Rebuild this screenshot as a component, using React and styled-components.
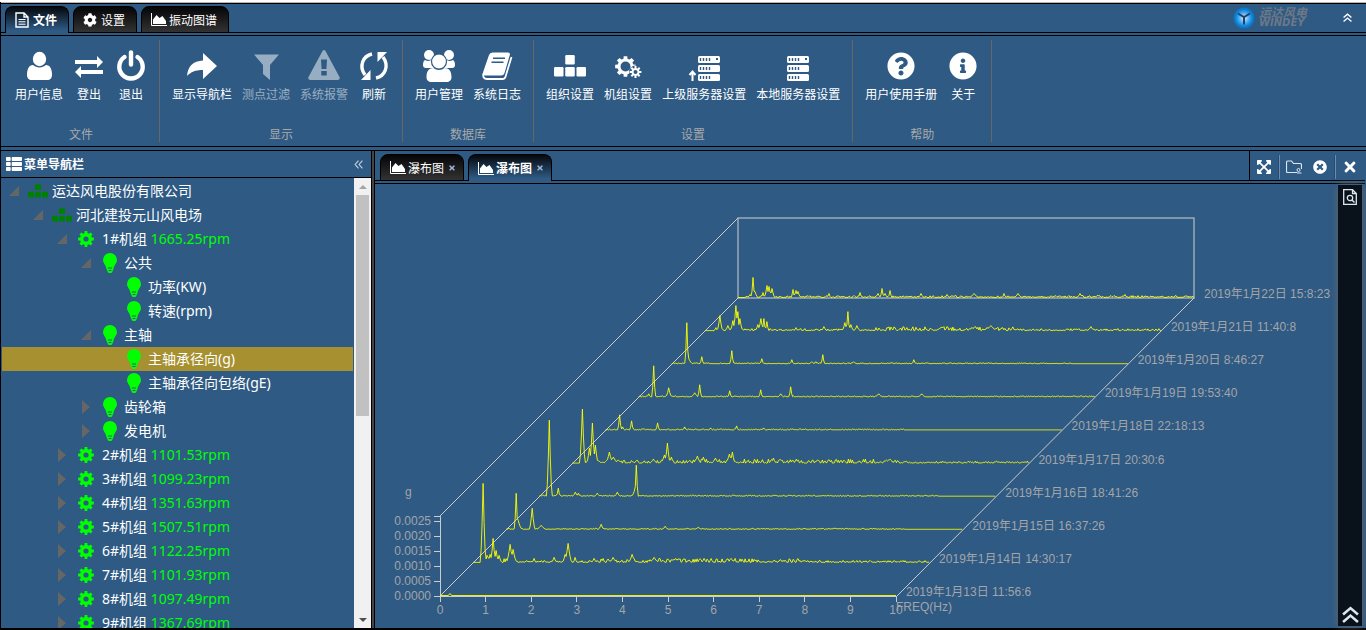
import React from "react";
import styled, { createGlobalStyle, css } from "styled-components";
import {
  FaCog,
  FaExpandArrowsAlt,
  FaInfoCircle,
  FaQuestionCircle,
  FaThList,
  FaTimes,
  FaTimesCircle,
} from "react-icons/fa";

const COLORS = {
  blue: "#2e5a84",
  black: "#000",
  strip: "#09111a",
  divider: "#666",
  muted: "#a9a9a9",
  selected: "#a69030",
  lime: "#0f0",
  green: "#008000",
  trace: "#ff0",
  axis: "#ccc",
};

const FONTS = {
  ui: '"Noto Sans", "Noto Sans CJK SC", sans-serif',
  chart: '"Liberation Sans", "Noto Sans CJK SC", sans-serif',
};

/* ---------- data ---------- */

const RIBBON_TABS = [
  { label: "文件", icon: "file", active: true },
  { label: "设置", icon: "cog" },
  { label: "振动图谱", icon: "area" },
];

const RIBBON_GROUPS = [
  {
    label: "文件",
    items: [
      { label: "用户信息", icon: "user" },
      { label: "登出", icon: "exchange" },
      { label: "退出", icon: "power" },
    ],
  },
  {
    label: "显示",
    items: [
      { label: "显示导航栏", icon: "share" },
      { label: "测点过滤", icon: "filter", disabled: true },
      { label: "系统报警", icon: "warning", disabled: true },
      { label: "刷新", icon: "refresh" },
    ],
  },
  {
    label: "数据库",
    items: [
      { label: "用户管理", icon: "users" },
      { label: "系统日志", icon: "book" },
    ],
  },
  {
    label: "设置",
    items: [
      { label: "组织设置", icon: "org" },
      { label: "机组设置", icon: "gears" },
      { label: "上级服务器设置", icon: "serverUp" },
      { label: "本地服务器设置", icon: "server" },
    ],
  },
  {
    label: "帮助",
    items: [
      { label: "用户使用手册", icon: "help" },
      { label: "关于", icon: "info" },
    ],
  },
];

const TREE = [
  { level: 0, icon: "org", label: "运达风电股份有限公司", open: true },
  { level: 1, icon: "org", label: "河北建投元山风电场", open: true },
  { level: 2, icon: "gear", label: "1#机组", speed: "1665.25rpm", open: true },
  { level: 3, icon: "bulb", label: "公共", open: true },
  { level: 4, icon: "bulb", label: "功率(KW)" },
  { level: 4, icon: "bulb", label: "转速(rpm)" },
  { level: 3, icon: "bulb", label: "主轴", open: true },
  { level: 4, icon: "bulb", label: "主轴承径向(g)", selected: true },
  { level: 4, icon: "bulb", label: "主轴承径向包络(gE)" },
  { level: 3, icon: "bulb", label: "齿轮箱", open: false },
  { level: 3, icon: "bulb", label: "发电机", open: false },
  { level: 2, icon: "gear", label: "2#机组", speed: "1101.53rpm", open: false },
  { level: 2, icon: "gear", label: "3#机组", speed: "1099.23rpm", open: false },
  { level: 2, icon: "gear", label: "4#机组", speed: "1351.63rpm", open: false },
  { level: 2, icon: "gear", label: "5#机组", speed: "1507.51rpm", open: false },
  { level: 2, icon: "gear", label: "6#机组", speed: "1122.25rpm", open: false },
  { level: 2, icon: "gear", label: "7#机组", speed: "1101.93rpm", open: false },
  { level: 2, icon: "gear", label: "8#机组", speed: "1097.49rpm", open: false },
  { level: 2, icon: "gear", label: "9#机组", speed: "1367.69rpm", open: false },
];

// peaks: [x, height, half width]; noise: [from, to, amplitude], all in chart units
const SERIES = [
  { label: "2019年1月13日 11:56:6", peaks: [[10, 2, 1]], noise: [] },
  {
    label: "2019年1月14日 14:30:17",
    peaks: [
      [10, 79, 2], [14, 7, 2], [17, 8, 2], [20, 24, 2], [23, 12, 2], [26, 7, 2],
      [37, 18, 3], [40, 13, 3], [61, 4, 1], [81, 5, 2], [92, 8, 2], [95, 19, 3],
      [102, 5, 1], [121, 4, 2], [140, 5, 3], [159, 8, 3], [181, 5, 4], [231, 4, 2], [258, 4, 3],
    ],
    noise: [[12, 36, 6], [40, 120, 2], [120, 330, 4], [330, 456, 2]],
  },
  {
    label: "2019年1月15日 16:37:26",
    peaks: [[10, 36, 1], [12, 9, 3], [26, 21, 2], [35, 4, 4], [95, 5, 2], [159, 3, 2], [192, 2, 3]],
    noise: [[0, 400, 1]],
  },
  {
    label: "2019年1月16日 18:41:26",
    peaks: [[10, 76, 2], [19, 8, 1], [36, 4, 2], [39, 3, 1], [58, 3, 2], [78, 4, 2], [95, 5, 2], [97, 31, 1]],
    noise: [[0, 400, 1]],
  },
  {
    label: "2019年1月17日 20:30:6",
    peaks: [
      [10, 54, 2], [17, 15, 2], [20, 40, 2], [23, 18, 2], [37, 11, 3], [41, 6, 4],
      [81, 4, 3], [92, 8, 3], [95, 20, 2], [99, 6, 2], [125, 7, 3], [131, 6, 2],
      [143, 5, 3], [157, 9, 3], [160, 11, 2], [201, 5, 2], [224, 4, 2], [314, 3, 4],
    ],
    noise: [[8, 115, 3], [115, 330, 4], [330, 456, 2]],
  },
  {
    label: "2019年1月18日 22:18:13",
    peaks: [[14, 15, 1], [17, 3, 1], [26, 9, 1], [52, 7, 1], [79, 3, 1], [105, 2, 1], [131, 4, 1], [158, 2, 1]],
    noise: [[0, 300, 1]],
  },
  {
    label: "2019年1月19日 19:53:40",
    peaks: [
      [10, 3, 1], [15, 31, 1], [30, 9, 2], [56, 4, 3], [61, 12, 1], [91, 6, 1],
      [122, 7, 1], [142, 3, 2], [152, 10, 1], [240, 3, 3], [283, 3, 3],
    ],
    noise: [[0, 456, 1]],
  },
  {
    label: "2019年1月20日 8:46:27",
    peaks: [
      [15, 41, 1], [17, 5, 3], [30, 7, 1], [60, 13, 1], [90, 5, 1], [120, 4, 1],
      [140, 2, 2], [144, 2, 1], [151, 9, 1], [182, 2, 2], [242, 4, 1],
    ],
    noise: [[0, 400, 1]],
  },
  {
    label: "2019年1月21日 11:40:8",
    peaks: [
      [11, 3, 1], [15, 15, 2], [23, 5, 2], [28, 10, 2], [31, 25, 2], [33, 19, 1],
      [35, 12, 2], [53, 6, 2], [56, 12, 2], [59, 12, 1], [62, 9, 1], [91, 3, 1],
      [119, 4, 2], [140, 8, 2], [143, 19, 1], [146, 6, 2], [152, 5, 2],
      [236, 3, 5], [270, 4, 4], [286, 5, 6], [386, 4, 3],
    ],
    noise: [[10, 170, 2], [170, 310, 4], [310, 456, 2]],
  },
  {
    label: "2019年1月22日 15:8:23",
    peaks: [
      [12, 3, 2], [15, 20, 1], [17, 6, 2], [25, 5, 1], [29, 12, 2], [31, 11, 2],
      [34, 9, 2], [55, 8, 1], [58, 7, 2], [60, 6, 2], [91, 4, 1], [116, 2, 2],
      [122, 5, 1], [140, 4, 2], [144, 9, 1], [147, 4, 2], [152, 7, 1],
      [183, 4, 2], [209, 3, 1], [236, 4, 4], [266, 4, 1], [280, 4, 3],
      [342, 4, 2], [387, 3, 1],
    ],
    noise: [[8, 456, 2]],
  },
];

/* ---------- icons ---------- */

const gearPath = (cx, cy, outer, inner, teeth, hole) => {
  const step = (Math.PI * 2) / teeth;
  const points = [];
  for (let i = 0; i < teeth; i++) {
    [[-0.32, inner], [-0.22, outer], [0.22, outer], [0.32, inner]].forEach(([t, r]) => {
      const a = (i + t) * step;
      points.push(`${(cx + r * Math.sin(a)).toFixed(2)} ${(cy - r * Math.cos(a)).toFixed(2)}`);
    });
  }
  return (
    `M${points.join("L")}Z` +
    `M${cx - hole} ${cy}a${hole} ${hole} 0 1 0 ${hole * 2} 0a${hole} ${hole} 0 1 0 ${-hole * 2} 0Z`
  );
};

const Servers = ({ x }) => (
  <g>
    {[6, 15, 24].map((y) => (
      <g key={y}>
        <rect x={x} y={y} width='22' height='7' rx='1.5' fill='currentColor' />
        <path
          d={`M${x + 2.5} ${y + 2}v3m3-3v3m3-3v3m3-3v3`}
          stroke={COLORS.blue}
          strokeWidth='1.4'
          fill='none'
        />
      </g>
    ))}
    <rect x={x + 18} y='8' width='2' height='2' fill={COLORS.blue} />
  </g>
);

const ICONS = {
  user: (
    <g fill='currentColor'>
      <ellipse cx='16.5' cy='9' rx='6.7' ry='7.2' />
      <path d='M10 15C6 15 4 19 4 25c0 3 2 5 4.500 5h16c2.500 0 4.500-2 4.500-5 0-6-2-10-6-10-2 1.600-4 2.400-6.500 2.400S12 16.600 10 15z' />
    </g>
  ),
  exchange: (
    <path
      fill='currentColor'
      d='M2 10h22V6l6 6-6 6v-4H2zM30 20H8v-4l-6 6 6 6v-4h22z'
    />
  ),
  power: (
    <g fill='none' stroke='currentColor' strokeWidth='4.4' strokeLinecap='round'>
      <path d='M9.500 7A11.700 11.700 0 1 0 22.500 7' />
      <path d='M16 2.500v12' />
    </g>
  ),
  share: <path fill='currentColor' d='M17 3v7.500C7 11 2 16 1 26c4-4 8-6 16-6v9l14-13z' />,
  filter: <path fill='currentColor' d='M4 4.500h25L20 15v15l-7-6v-9z' />,
  warning: (
    <path
      fill='currentColor'
      fillRule='evenodd'
      d='M14.500 1q1.500-2 3 0l14 26q1 2.500-1.500 3H2q-2.500-.5-1.500-3zM13 9.500l.6 9.500h4.800l.6-9.500zM13.300 21v4.500h5.400V21z'
    />
  ),
  refresh: (
    <g fill='none' stroke='currentColor' strokeWidth='3.4'>
      <path d='M14 4C5 6 .5 16 7 25' />
      <path d='M18 28c9-2 13.500-12 7-21' />
      <path d='M3 30h9.500v-10zM29 2h-9.500v10z' fill='currentColor' stroke='none' />
    </g>
  ),
  users: (
    <g fill='currentColor'>
      <circle cx='6' cy='5' r='5' />
      <circle cx='26' cy='5' r='5' />
      <path d='M2 10Q6 12 9 9.500L11 18H3q-3 0-3-3 0-4 2-5zM30 10q-4 2-7-.5L21 18h8q3 0 3-3 0-4-2-5z' />
      <circle cx='16' cy='11.5' r='7.500' stroke={COLORS.blue} strokeWidth='1.2' />
      <path d='M10.500 18C6 18 3.500 21 3.500 27c0 3.500 2 5 5 5h15c3 0 5-1.500 5-5 0-6-2.500-9-7-9-3 2.500-8 2.500-11 0z' />
    </g>
  ),
  book: (
    <g>
      <path
        d='M11.500 2.500H27q2.500 0 1.800 2.500L23.500 23q-.7 2.500-3.500 2.500H5q-4 0-2.700-4L8 5q.8-2.500 3.500-2.500z'
        fill='currentColor'
      />
      <path
        d='M2.300 23.500Q1.500 29 6 29h15.500q2.300 0 3-2.300L30.500 7'
        fill='none'
        stroke='currentColor'
        strokeWidth='1.800'
      />
      <path d='M12 8.200h12M10.500 12.200h12' stroke={COLORS.blue} strokeWidth='1.600' />
    </g>
  ),
  org: (
    <g fill='currentColor'>
      <rect x='11.250' y='5' width='9.500' height='9.500' rx='1.2' />
      <rect x='0' y='17' width='9.500' height='9.500' rx='1.2' />
      <rect x='11.250' y='17' width='9.500' height='9.500' rx='1.2' />
      <rect x='22.500' y='17' width='9.500' height='9.500' rx='1.2' />
    </g>
  ),
  gears: (
    <g fill='currentColor' fillRule='evenodd'>
      <path d={gearPath(13.5, 16.5, 10.5, 8, 8, 5)} />
      <circle cx='23.500' cy='22' r='6.500' fill={COLORS.blue} />
      <path d={gearPath(23.5, 22, 6, 4, 8, 2)} />
    </g>
  ),
  serverUp: (
    <g>
      <Servers x={10} />
      <path d='M4.500 31v-8M1.500 25l3-3.500 3 3.500' fill='none' stroke='currentColor' strokeWidth='2' />
    </g>
  ),
  server: <Servers x={5} />,
  help: <FaQuestionCircle x='2' y='2' size={28} />,
  info: <FaInfoCircle x='2' y='2' size={28} />,
};

const RibbonIcon = ({ id, size = 32 }) => (
  <svg width={size} height={size} viewBox='0 0 32 32' aria-hidden='true'>
    {ICONS[id]}
  </svg>
);

const CHEVRONS = {
  up: "M1 8l7-6 7 6M1 15l7-6 7 6",
  left: "M8 1L2 8l6 7M15 1L9 8l6 7",
};

const Chevrons = ({ to, size, strokeWidth, color = "currentColor" }) => (
  <svg
    width={size}
    height={size}
    viewBox='0 0 16 16'
    fill='none'
    stroke={color}
    strokeWidth={strokeWidth}
    aria-hidden='true'
  >
    <path d={CHEVRONS[to]} />
  </svg>
);

const AreaIcon = () => (
  <svg width='16' height='13' viewBox='0 0 16 13' aria-hidden='true'>
    <path d='M.5 0v12.500H16' fill='none' stroke='currentColor' />
    <path d='M2 11V6.500L5.500 2 8.500 5l3-2 3.500 5v3z' fill='currentColor' />
  </svg>
);

const FileIcon = () => (
  <svg width='14' height='16' viewBox='0 0 14 16' fill='none' stroke='currentColor' aria-hidden='true'>
    <path d='M1 1h8l4 4v10H1zM9 1v4h4' strokeWidth='1.4' />
    <path d='M3.500 7.500h7M3.500 9.800h7M3.500 12.200h7' />
  </svg>
);

const GearIcon = () => (
  <svg width='16' height='16' viewBox='0 0 16 16' aria-hidden='true'>
    <path d={gearPath(8, 8, 8, 6, 8, 2.6)} fill='currentColor' fillRule='evenodd' />
  </svg>
);

const BulbIcon = () => (
  <svg width='14' height='20' viewBox='0 0 14 20' aria-hidden='true'>
    <path
      d='M7 0a7 7 0 0 1 7 7c0 3.500-3 5-3.500 9L9 19.500Q7 20.500 5 19.500L3.500 16C3 12 0 10.500 0 7a7 7 0 0 1 7-7z'
      fill='currentColor'
    />
    <path d='M5 15h4M5.500 17.500h3' stroke={COLORS.blue} />
  </svg>
);

const FolderIcon = () => (
  <svg width='16' height='14' viewBox='0 0 16 14' fill='none' stroke='#dde6ee' aria-hidden='true'>
    <path d='M11 12.500H1.500Q.5 12.500.5 11.500V2.500Q.5 1 2 1h3.500l2 2.500H14q1.500 0 1.500 1.500v4' strokeWidth='1.2' />
    <circle cx='12.500' cy='10' r='1.500' />
    <path d='M11 13h4.500' />
  </svg>
);

const PageSearchIcon = () => (
  <svg width='14' height='16' viewBox='0 0 14 16' fill='none' stroke='#dde6ee' aria-hidden='true'>
    <path d='M.7.700h8.800l3.800 3.800v10.800H.7zM9.500.700v3.800h3.800' strokeWidth='1.3' />
    <circle cx='7' cy='9' r='2.700' strokeWidth='1.3' />
    <path d='M9 11l2.500 2.500' strokeWidth='1.500' />
  </svg>
);

const LogoMark = () => (
  <svg width='22' height='22' viewBox='0 0 22 22' aria-hidden='true'>
    <defs>
      <radialGradient id='logo-glow'>
        <stop offset='0' stopColor='#d9efff' />
        <stop offset='0.5' stopColor='#4aa8ee' />
        <stop offset='0.8' stopColor='#0a82d8' />
        <stop offset='1' stopColor='#0c72c0' />
      </radialGradient>
    </defs>
    <circle cx='11' cy='11' r='10.500' fill='url(#logo-glow)' />
    <path d='M5 6.500L11 10l6-3.500M11 10v7.500' fill='none' stroke='#1d4468' strokeWidth='2' />
  </svg>
);

/* ---------- waterfall chart ---------- */

const CHART = { left: 440, right: 897, base: 596, top: 516, depth: 298 };
const Y_LABELS = ["0.0000", "0.0005", "0.0010", "0.0015", "0.0020", "0.0025"];

const makeRandom = (seed) => {
  let state = seed * 7919 + 17;
  return () => {
    state = (state * 16807) % 2147483647;
    return state / 2147483647;
  };
};

const tracePoints = (series, index) => {
  const random = makeRandom(index + 1);
  const shift = (CHART.depth / (SERIES.length - 1)) * index;
  const points = [];
  for (let x = 0; x < CHART.right - CHART.left; x++) {
    const range = series.noise.find(([from, to]) => x >= from && x < to);
    let height = range ? random() ** 2 * range[2] : 0;
    series.peaks.forEach(([px, h, w]) => {
      const distance = Math.abs(x - px);
      if (distance <= w) {
        height = Math.max(height, h * (1 - distance / (w + 1)) ** 1.7);
      }
    });
    points.push(`${(CHART.left + shift + x).toFixed(1)},${(CHART.base - 0.5 - shift - height).toFixed(1)}`);
  }
  return points.join(" ");
};

const WaterfallChart = () => {
  const { left, right, base, top, depth } = CHART;
  const step = depth / (SERIES.length - 1);

  return (
    <ChartSvg viewBox='375 184 963 444' role='img' aria-label='瀑布图'>
      <g fill='none' stroke='#9aabba' strokeWidth='1.5'>
        <path d={`M${left + depth} ${base - depth}V${top - depth}H${right + depth - 1}V${base - depth}Z`} />
      </g>
      <g fill='none' stroke={COLORS.axis}>
        <path d={`M${left} ${top}L${left + depth} ${top - depth}`} />
        <path d={`M${left} ${base}L${left + depth} ${base - depth}`} />
        <path d={`M${right} ${base}L${right + depth - 1} ${base - depth}`} />
        <path d={`M${left - 6} ${top + 0.5}h6.500V${base + 0.5}H${right}`} />
        {Y_LABELS.map((label, i) => (
          <path key={label} d={`M${left - 6} ${base + 0.5 - i * 15}h6`} />
        ))}
        {Array.from({ length: 11 }, (_, i) => (
          <path key={i} d={`M${Math.floor(left + i * 45.6) + 0.5} ${base}v6`} />
        ))}
      </g>
      {SERIES.map((series, i) => (
        <polyline
          key={series.label}
          points={tracePoints(series, i)}
          fill='none'
          stroke={COLORS.trace}
          strokeWidth='1'
          strokeOpacity='0.9'
        />
      ))}
      <ChartText x='405' y='496'>g</ChartText>
      {Y_LABELS.map((label, i) => (
        <ChartText key={label} x='431' y={base + 4 - i * 15} textAnchor='end'>
          {label}
        </ChartText>
      ))}
      {Array.from({ length: 11 }, (_, i) => (
        <ChartText key={i} x={left + i * 45.6} y='614' textAnchor='middle'>
          {i}
        </ChartText>
      ))}
      <ChartText x='896' y='611'>FREQ(Hz)</ChartText>
      {SERIES.map((series, i) => (
        <ChartText key={series.label} x={906 + step * i} y={base - step * i}>
          {series.label}
        </ChartText>
      ))}
    </ChartSvg>
  );
};

/* ---------- page parts ---------- */

const TAB_ICONS = {
  file: <FileIcon />,
  cog: <FaCog size={14} />,
  area: <AreaIcon />,
};

const TREE_ICONS = {
  org: <RibbonIcon id='org' size={20} />,
  gear: <GearIcon />,
  bulb: <BulbIcon />,
};

const Ribbon = () => (
  <header>
    <TabBar>
      <TabList role='tablist'>
        {RIBBON_TABS.map(({ label, icon, active }) => (
          <Tab key={label} role='tab' aria-selected={!!active} $active={active}>
            <TabIcon>{TAB_ICONS[icon]}</TabIcon>
            {label}
          </Tab>
        ))}
      </TabList>
      <Brand>
        <LogoMark />
        <BrandName>
          <span>运达风电</span>
          <span>WINDEY</span>
        </BrandName>
      </Brand>
      <IconButton aria-label='收起功能区'>
        <Chevrons to='up' size={9} strokeWidth={2.4} />
      </IconButton>
    </TabBar>
    <RibbonBody>
      {RIBBON_GROUPS.map((group) => (
        <RibbonGroup key={group.label}>
          <RibbonItems>
            {group.items.map(({ label, icon, disabled }) => (
              <RibbonButton key={label} disabled={disabled}>
                <RibbonIcon id={icon} />
                {label}
              </RibbonButton>
            ))}
          </RibbonItems>
          <GroupLabel>{group.label}</GroupLabel>
        </RibbonGroup>
      ))}
    </RibbonBody>
  </header>
);

const Sidebar = () => (
  <SidebarWrapper>
    <SidebarHeader>
      <FaThList size={16} />
      <SidebarTitle>菜单导航栏</SidebarTitle>
      <IconButton aria-label='收起导航栏'>
        <Chevrons to='left' size={9} strokeWidth={2} color='#c5d1dd' />
      </IconButton>
    </SidebarHeader>
    <TreeArea>
      <Tree role='tree'>
        {TREE.map((node) => (
          <TreeRow
            key={node.label}
            role='treeitem'
            aria-level={node.level + 1}
            aria-expanded={node.open}
            aria-selected={!!node.selected}
            $level={node.level}
            $selected={node.selected}
          >
            <TreeSlot>{node.open !== undefined && <Twisty $open={node.open} />}</TreeSlot>
            <TreeSlot $color={node.icon === "org" ? COLORS.green : COLORS.lime}>
              {TREE_ICONS[node.icon]}
            </TreeSlot>
            <TreeLabel $wide={node.icon === "gear"}>
              {node.label} {node.speed && <Speed>{node.speed}</Speed>}
            </TreeLabel>
          </TreeRow>
        ))}
      </Tree>
      <ScrollTrack aria-hidden='true'>
        <ScrollArrow $up />
        <ScrollThumb />
        <ScrollArrow />
      </ScrollTrack>
    </TreeArea>
  </SidebarWrapper>
);

const Workspace = () => (
  <WorkspaceWrapper>
    <WorkspaceBar>
      <TabList role='tablist'>
        {[false, true].map((active) => (
          <Tab key={String(active)} role='tab' aria-selected={active} $active={active}>
            <TabIcon>
              <AreaIcon />
            </TabIcon>
            瀑布图
            <TabClose>
              <FaTimes size={8} />
            </TabClose>
          </Tab>
        ))}
      </TabList>
      <Toolbar>
        <ToolButton aria-label='全屏'>
          <FaExpandArrowsAlt size={16} />
        </ToolButton>
        <ToolDivider />
        <ToolButton aria-label='打开'>
          <FolderIcon />
        </ToolButton>
        <ToolButton aria-label='关闭当前'>
          <FaTimesCircle size={14} />
        </ToolButton>
        <ToolDivider />
        <ToolButton aria-label='关闭'>
          <FaTimes size={16} />
        </ToolButton>
      </Toolbar>
    </WorkspaceBar>
    <ChartArea>
      <WaterfallChart />
      <SideStrip>
        <IconButton aria-label='查看'>
          <PageSearchIcon />
        </IconButton>
        <IconButton aria-label='展开'>
          <Chevrons to='up' size={17} strokeWidth={2.4} color='#dde6ee' />
        </IconButton>
      </SideStrip>
    </ChartArea>
  </WorkspaceWrapper>
);

const App = () => (
  <Page>
    <GlobalStyle />
    <Ribbon />
    <Main>
      <Sidebar />
      <Splitter />
      <Workspace />
    </Main>
  </Page>
);

/* ---------- styles ---------- */

const GlobalStyle = createGlobalStyle`
  *, *::before, *::after {
    box-sizing: border-box;
  }

  body {
    margin: 0;
    background: ${COLORS.blue};
    color: #fff;
    font-family: ${FONTS.ui};
    font-size: 12px;
    overflow: hidden;
  }

  button {
    border: none;
    padding: 0;
    background: none;
    color: inherit;
    font: inherit;
  }

  svg {
    display: block;
    flex-shrink: 0;
  }
`;

const Page = styled.div`
  display: flex;
  flex-direction: column;
  height: 100vh;
  border-top: 2px solid #fff;
  border-bottom: 2px solid ${COLORS.black};
  box-shadow: inset 1px 0 0 ${COLORS.black};
  padding-left: 1px;
`;

const TabBar = styled.div`
  display: flex;
  align-items: center;
  height: 31px;
  padding: 0 14px 0 4px;
  border-top: 1px solid #b5b5b5;
  border-bottom: 1px solid ${COLORS.black};
  box-shadow: inset 0 1px 0 ${COLORS.black};
`;

const TabList = styled.div`
  display: flex;
  align-self: flex-end;
  gap: 4px;
  flex: 1;
  margin-bottom: -1px;
`;

const Tab = styled.button`
  display: flex;
  align-items: center;
  height: 27px;
  padding: 0 11px 0 9px;
  border: 1px solid ${COLORS.black};
  border-radius: 8px 8px 0 0;
  background: linear-gradient(#050508, #333);

  ${({ $active }) =>
    $active &&
    css`
      border-bottom: none;
      background: linear-gradient(#05080c, ${COLORS.blue} 90%);
      font-weight: bold;
    `}
`;

const TabIcon = styled.span`
  width: 18px;
`;

const TabClose = styled.span`
  margin-left: 4px;
  margin-right: -4px;
  color: #9db8dc;
`;

const Brand = styled.div`
  display: flex;
  align-items: center;
  gap: 4px;
  margin-right: 36px;
`;

const BrandName = styled.div`
  display: flex;
  flex-direction: column;
  color: #6c7886;
  font-size: 12px;
  font-style: italic;
  font-weight: bold;
  line-height: 10px;

  span + span {
    font-family: "DejaVu Sans", sans-serif;
    font-size: 10px;
  }
`;

const IconButton = styled.button`
  display: flex;
  align-items: center;
  justify-content: center;
`;

const ToolButton = styled(IconButton)`
  width: 26px;
  height: 26px;
`;

const RibbonBody = styled.div`
  display: flex;
  margin: 2px 0 3px;
  padding: 4px 2px;
  border-top: 1px solid ${COLORS.black};
  border-bottom: 1px solid ${COLORS.black};
`;

const RibbonGroup = styled.section`
  display: flex;
  flex-direction: column;
  justify-content: space-between;
  height: 102px;
  padding: 10px 12px 0;
  border-right: 1px solid ${COLORS.divider};
`;

const RibbonItems = styled.div`
  display: flex;
  gap: 10px;
`;

const RibbonButton = styled.button`
  display: flex;
  flex-direction: column;
  align-items: center;
  gap: 4px;
  min-width: 32px;
  line-height: 18px;
  white-space: nowrap;

  &:disabled {
    opacity: 0.5;
  }
`;

const GroupLabel = styled.div`
  color: ${COLORS.muted};
  line-height: 14px;
  text-align: center;
`;

const Main = styled.main`
  display: flex;
  flex: 1;
  min-height: 0;
  border-top: 1px solid ${COLORS.black};
`;

const SidebarWrapper = styled.aside`
  display: flex;
  flex-direction: column;
  flex: 0 0 371px;
  border-right: 1px solid ${COLORS.black};
`;

const SidebarHeader = styled.div`
  display: flex;
  align-items: center;
  gap: 2px;
  height: 27px;
  padding: 0 8px 0 5px;
  border-bottom: 1px solid ${COLORS.black};
`;

const SidebarTitle = styled.h2`
  flex: 1;
  margin: 0;
  font-size: 12px;
`;

const TreeArea = styled.div`
  display: flex;
  flex: 1;
  min-height: 0;
`;

const Tree = styled.ul`
  flex: 1;
  margin: 0;
  padding: 1px;
  overflow: hidden;
  list-style: none;
`;

const TreeRow = styled.li`
  display: flex;
  height: 24px;
  padding-left: ${({ $level }) => $level * 24}px;
  background: ${({ $selected }) => ($selected ? COLORS.selected : "none")};
  font-size: 14px;
  line-height: 23px;
  white-space: nowrap;
`;

const TreeSlot = styled.span`
  display: flex;
  align-items: center;
  justify-content: center;
  width: 24px;
  height: 24px;
  color: ${({ $color }) => $color};
`;

const Twisty = styled.span`
  width: ${({ $open }) => ($open ? 10 : 8)}px;
  height: ${({ $open }) => ($open ? 10 : 14)}px;
  background: ${COLORS.divider};
  clip-path: ${({ $open }) =>
    $open ? "polygon(100% 0, 100% 100%, 0 100%)" : "polygon(0 0, 100% 50%, 0 100%)"};
`;

const TreeLabel = styled.span`
  padding-left: ${({ $wide }) => ($wide ? 4 : 2)}px;
`;

const Speed = styled.span`
  color: ${COLORS.lime};
`;

const ScrollTrack = styled.div`
  display: flex;
  flex-direction: column;
  width: 17px;
  background: #f1f1f1;
`;

const ScrollArrow = styled.span`
  display: flex;
  align-items: center;
  justify-content: center;
  height: 17px;
  margin-top: ${({ $up }) => ($up ? 0 : "auto")};

  &::before {
    content: "";
    border: 4px solid transparent;
    border-top: ${({ $up }) => ($up ? "none" : "4px solid #505050")};
    border-bottom: ${({ $up }) => ($up ? "4px solid #a3a3a3" : "none")};
  }
`;

const ScrollThumb = styled.span`
  height: 49%;
  margin: 0 2px;
  background: #c1c1c1;
`;

const Splitter = styled.div`
  width: 3px;
  border-right: 1px solid ${COLORS.black};
  background: #444;
`;

const WorkspaceWrapper = styled.section`
  display: flex;
  flex-direction: column;
  flex: 1;
  min-width: 0;
  margin-right: 1px;
`;

const WorkspaceBar = styled.div`
  display: flex;
  height: 30px;
  padding-left: 5px;
  border-bottom: 1px solid ${COLORS.black};
`;

const Toolbar = styled.div`
  display: flex;
  align-items: center;
  padding: 2px 2px 0 1px;
  border-left: 1px solid ${COLORS.black};
`;

const ToolDivider = styled.span`
  width: 2px;
  height: 24px;
  margin: 0 1px;
  border-left: 1px solid #444;
  background: #4a94e0;
`;

const ChartArea = styled.div`
  display: flex;
  flex: 1;
  min-height: 0;
  margin-top: 2px;
  border-top: 1px solid ${COLORS.black};
`;

const ChartSvg = styled.svg`
  flex: 1;
  min-width: 0;
  height: 100%;
`;

const ChartText = styled.text`
  fill: #a3a5a8;
  font-family: ${FONTS.chart};
  font-size: 12px;
`;

const SideStrip = styled.div`
  display: flex;
  flex-direction: column;
  align-items: center;
  justify-content: space-between;
  width: 24px;
  margin: 1px 3px 2px 0;
  padding: 4px 0 3px;
  background: ${COLORS.strip};
  box-shadow: 0 0 8px #666;
`;

export default App;
